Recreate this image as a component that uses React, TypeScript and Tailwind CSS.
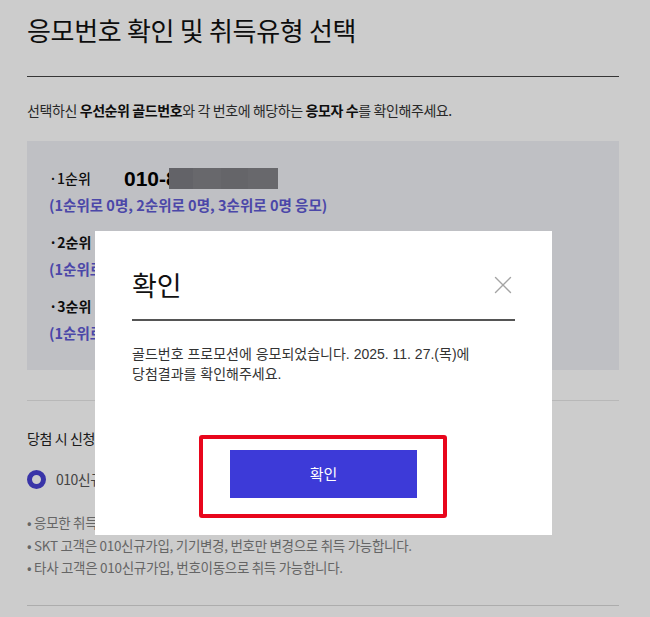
import { X } from 'lucide-react';

const KR = "font-['Noto_Sans_CJK_KR',sans-serif]";

const RANKS = [
  { id: 1, label: '1순위', bold: false },
  { id: 2, label: '2순위', bold: true },
  { id: 3, label: '3순위', bold: true },
];

const NOTES = [
  '응모한 취득유형으로만 당첨 번호를 취득할 수 있습니다.',
  'SKT 고객은 010신규가입, 기기변경, 번호만 변경으로 취득 가능합니다.',
  '타사 고객은 010신규가입, 번호이동으로 취득 가능합니다.',
];

function MaskedNumber() {
  return (
    <div className="flex items-center">
      <span className="font-['Liberation_Sans',sans-serif] text-[21px] font-bold leading-none text-black">010-8</span>
      {/* blurred digits */}
      <div className="-ml-[9px] flex h-[21px]">
        <div className="w-[24px] bg-[#7c7c82]" />
        <div className="w-[28px] bg-[#838388]" />
        <div className="w-[27px] bg-[#7f7f84]" />
        <div className="w-[30px] bg-[#828287]" />
      </div>
    </div>
  );
}

function RankRow({ label, bold }: { label: string; bold: boolean }) {
  return (
    <div>
      <div className="flex h-[22px] items-center">
        <span className={`w-[75px] text-[14px] text-[#111] ${bold ? 'font-bold' : 'font-medium'}`}>·{label}</span>
        <MaskedNumber />
      </div>
      <p className="mt-[5px] text-[14.5px] font-bold leading-[22px] text-[#5e59d3]">
        (1순위로 0명, 2순위로 0명, 3순위로 0명 응모)
      </p>
    </div>
  );
}

function ConfirmModal() {
  return (
    <div className="fixed left-[95px] top-[231px] h-[304px] w-[457px] bg-white">
      <div className="px-[37px] pt-[37px]">
        <div className="flex items-center justify-between border-b-2 border-[#555] pb-[17px]">
          <h2 className={`${KR} text-[27px] leading-[34px] text-[#111]`}>확인</h2>
          <X className="mr-[-3px] h-[30px] w-[30px] text-[#a4a4a4]" strokeWidth={1.1} />
        </div>
        <p className="mt-[23px] font-['Liberation_Sans','Noto_Sans_CJK_KR',sans-serif] text-[14px] leading-[20px] text-[#333]">
          골드번호 프로모션에 응모되었습니다. 2025. 11. 27.(목)에
          <br />
          당첨결과를 확인해주세요.
        </p>
      </div>
      <div className="mt-[66px] flex justify-center">
        <button
          type="button"
          className={`${KR} h-[48px] w-[187px] bg-[#3d3ad8] text-[15px] text-white`}
        >
          확인
        </button>
      </div>
      {/* highlight box drawn over the button */}
      <div className="absolute left-[104px] top-[204px] h-[83px] w-[248px] rounded-[3px] border-[4px] border-[#e8061c]" />
    </div>
  );
}

export default function App() {
  return (
    <div className={`${KR} min-h-[617px] w-[650px] bg-white`}>
      <div className="pl-[27px] pr-[31px] pt-[13px]">
        {/* Title */}
        <h1 className="text-[26px] leading-[34px] tracking-[-0.3px] text-[#111]">응모번호 확인 및 취득유형 선택</h1>
        <div className="mt-[29px] h-px bg-[#444]" />

        <p className="mt-[24px] text-[14px] leading-[18px] tracking-[-0.4px] text-[#333]">
          선택하신 <b className="text-[#111]">우선순위 골드번호</b>와 각 번호에 해당하는 <b className="text-[#111]">응모자 수</b>를 확인해주세요.
        </p>

        {/* Rank box */}
        <div className="mt-[22px] flex h-[229px] flex-col gap-[15px] bg-[#eff0f6] px-[22px] pt-[26px]">
          {RANKS.map(r => (
            <RankRow key={r.id} label={r.label} bold={r.bold} />
          ))}
        </div>

        <div className="mt-[30px] h-px bg-[#e6e6e6]" />

        {/* Acquisition type */}
        <p className="mt-[27px] text-[14px] leading-[20px] tracking-[-0.4px] text-[#222]">당첨 시 신청할 취득유형을 선택해주세요.</p>
        <label className="mt-[21px] flex items-center gap-[10px]">
          <span className="box-border h-[19px] w-[19px] rounded-full border-[5px] border-[#4842d2] bg-white" />
          <span className="text-[14px] tracking-[-0.5px] text-[#555]">010신규가입</span>
        </label>

        <ul className="mt-[21px] flex flex-col">
          {NOTES.map(n => (
            <li key={n} className="text-[13.5px] leading-[22.5px] tracking-[-0.3px] text-[#7f7f7f]">
              • {n}
            </li>
          ))}
        </ul>

        <div className="mt-[26px] h-px bg-[#d8d8d8]" />
      </div>

      {/* dim layer */}
      <div className="fixed inset-0 bg-black/20" />
      <ConfirmModal />
    </div>
  );
}
